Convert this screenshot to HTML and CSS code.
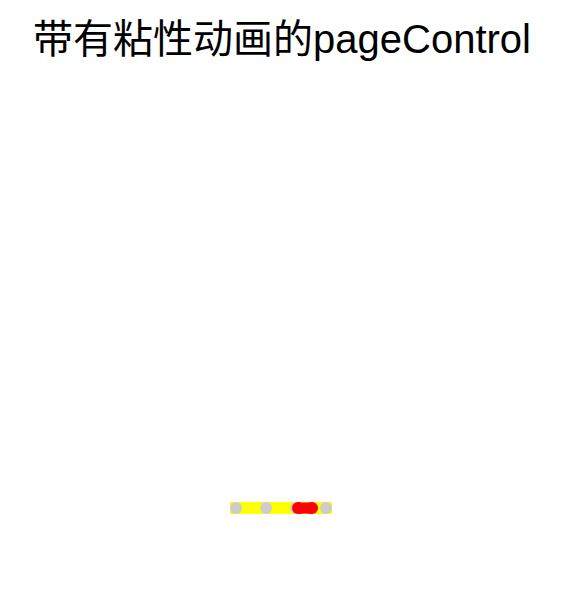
FILE: index.html
```html
<!DOCTYPE html>
<html lang="zh">
<head>
<meta charset="utf-8">
<title>带有粘性动画的pageControl</title>
<link rel="stylesheet" href="styles.css">
</head>
<body>
<div class="screen">
  <h1 class="title">带有粘性动画的pageControl</h1>
  <div class="pager-wrap">
    <div class="pager">
      <span class="dot"></span>
      <span class="dot"></span>
      <span class="dot"></span>
      <span class="dot"></span>
      <svg class="sticky" width="26" height="12" viewBox="0 0 26 12">
        <circle cx="6" cy="6" r="6" fill="#ff0000"/>
        <circle cx="20" cy="6" r="6" fill="#ff0000"/>
        <path d="M6 0 Q13 1.2 20 0 L20 12 Q13 10.8 6 12 Z" fill="#ff0000"/>
      </svg>
    </div>
  </div>
</div>
</body>
</html>
```
FILE: styles.css
```css
html, body {
  margin: 0;
  padding: 0;
  background: #ffffff;
}
.screen {
  width: 564px;
  height: 616px;
  display: flex;
  flex-direction: column;
}
.title {
  margin: 0;
  padding-top: 15px;
  font-family: "Liberation Sans", "Noto Sans CJK SC", sans-serif;
  font-weight: normal;
  font-size: 40px;
  line-height: 48px;
  color: #000000;
  text-align: center;
}
.pager-wrap {
  margin-top: 439px;
  display: flex;
  justify-content: center;
}
.pager {
  position: relative;
  display: flex;
  gap: 18px;
  background: #ffff00;
  height: 12px;
  margin-right: 2px;
}
.dot {
  width: 12px;
  height: 12px;
  border-radius: 50%;
  background: #cccccc;
}
.sticky {
  position: absolute;
  left: 62px;
  top: 0;
}
```
